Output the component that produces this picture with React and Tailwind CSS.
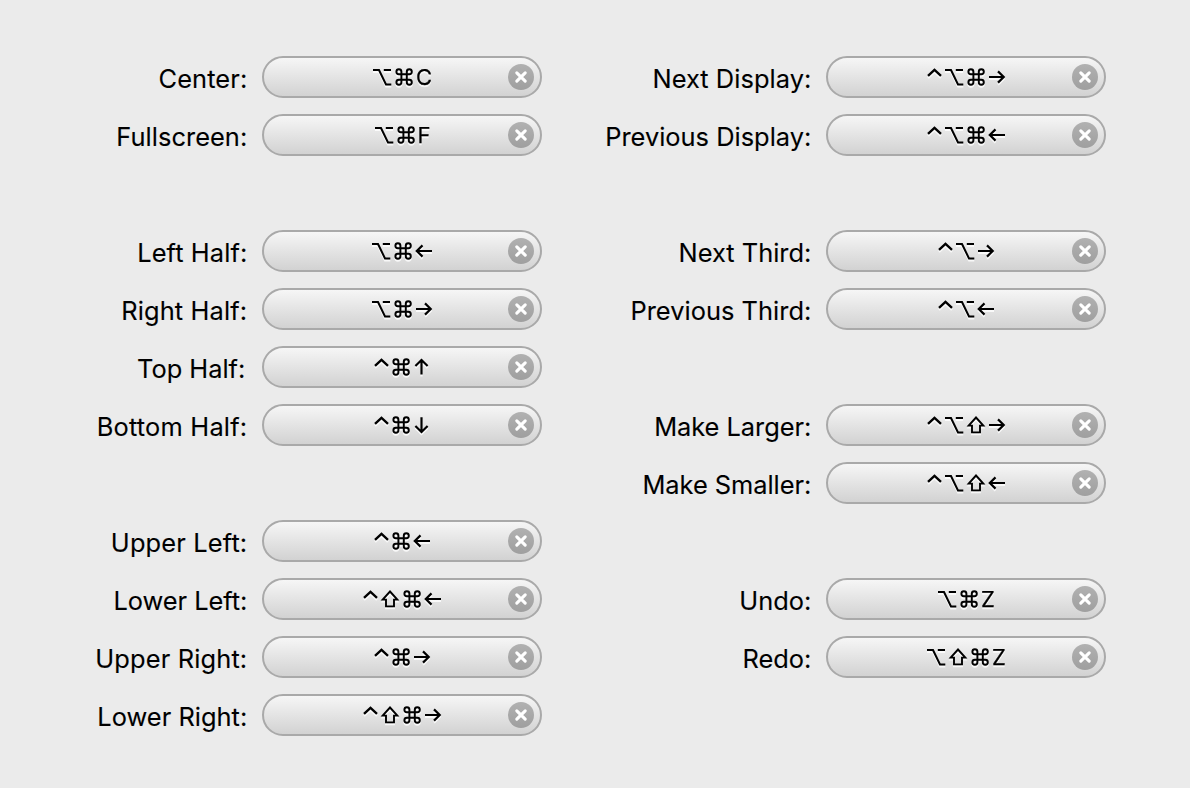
const stroke = {
  fill: 'none',
  stroke: 'currentColor',
  strokeWidth: 2,
  strokeLinejoin: 'miter',
};

function Control() {
  return (
    <svg className="h-[22px] w-[18px]" viewBox="0 0 18 22" {...stroke} strokeWidth="2.4" aria-label="Control">
      <path d="M2 9.8 8.5 3.9 15 9.8" />
    </svg>
  );
}

function Option() {
  return (
    <svg className="h-[22px] w-[22px]" viewBox="0 0 22 22" {...stroke} aria-label="Option">
      <path d="M1 4H7L14 18.4H19.3M11.8 4H19" />
    </svg>
  );
}

function Command() {
  return (
    <svg className="h-[22px] w-[22px]" viewBox="0 0 22 22" {...stroke} strokeWidth="1.95" aria-label="Command">
      <path d="M7.4 8.3H4.9a2.5 2.5 0 1 1 2.5-2.5V16.2A2.5 2.5 0 1 1 4.9 13.7H15.3a2.5 2.5 0 1 1-2.5 2.5V5.8a2.5 2.5 0 1 1 2.5 2.5Z" />
    </svg>
  );
}

function Shift() {
  return (
    <svg className="h-[22px] w-[22px]" viewBox="0 0 22 22" {...stroke} strokeWidth="1.9" aria-label="Shift">
      <path d="M10 3.5 17.3 11.6H14V18.4H6V11.6H2.7Z" />
    </svg>
  );
}

const arrowPaths = {
  right: 'M1 11H16M10 5.4 15.7 11 10 16.6',
  left: 'M17 11H2M7.5 5.4 1.8 11 7.5 16.6',
  up: 'M8.5 18.6V4.5M2.4 10 8.5 4 14.6 10',
  down: 'M8.5 3.2V17.5M2.4 12 8.5 18 14.6 12',
};

function Arrow({ direction }) {
  return (
    <svg className="h-[22px] w-[18px]" viewBox="0 0 18 22" {...stroke} strokeWidth="2.2" aria-label={direction}>
      <path d={arrowPaths[direction]} />
    </svg>
  );
}

function Key({ name }) {
  switch (name) {
    case 'ctrl':
      return <Control />;
    case 'opt':
      return <Option />;
    case 'cmd':
      return <Command />;
    case 'shift':
      return <Shift />;
    case 'left':
    case 'right':
    case 'up':
    case 'down':
      return <Arrow direction={name} />;
    default:
      return <span className="text-[22px] leading-[22px] [-webkit-text-stroke:0.25px_black]">{name}</span>;
  }
}

function Recorder({ keys }) {
  return (
    <div className="flex h-[42px] w-[280px] shrink-0 items-center rounded-full border-2 border-[#a9a9a9] bg-linear-to-b from-[#f6f6f6] to-[#d2d2d2] pr-[6px] pl-8">
      <div className="flex flex-1 items-center justify-center drop-shadow-[0_2px_0_rgba(255,255,255,0.8)]">
        {keys.split(' ').map((key) => (
          <Key key={key} name={key} />
        ))}
      </div>
      <button
        aria-label="Clear shortcut"
        className="flex size-[26px] items-center justify-center rounded-full bg-linear-to-b from-[#b1b1b1] to-[#9f9f9f]"
      >
        <svg className="size-[26px]" viewBox="0 0 26 26" stroke="#fff" strokeWidth="3.1" strokeLinecap="round">
          <path d="M8.8 8.8 17.2 17.2M17.2 8.8 8.8 17.2" />
        </svg>
      </button>
    </div>
  );
}

const leftGroups = [
  [
    ['Center:', 'opt cmd C', 'tracking-[0.1px]'],
    ['Fullscreen:', 'opt cmd F', 'tracking-[0.06px]'],
  ],
  [
    ['Left Half:', 'opt cmd left', 'tracking-[0.1px]'],
    ['Right Half:', 'opt cmd right', 'tracking-[0.15px]'],
    ['Top Half:', 'ctrl cmd up', 'pr-[2px] tracking-[0px]'],
    ['Bottom Half:', 'ctrl cmd down', 'tracking-[0.2px]'],
  ],
  [
    ['Upper Left:', 'ctrl cmd left', 'tracking-[0.15px]'],
    ['Lower Left:', 'ctrl shift cmd left', 'tracking-[-0.03px]'],
    ['Upper Right:', 'ctrl cmd right', 'tracking-[0.15px]'],
    ['Lower Right:', 'ctrl shift cmd right', 'tracking-[0.03px]'],
  ],
];

const rightGroups = [
  [
    ['Next Display:', 'ctrl opt cmd right', 'tracking-[0.05px]'],
    ['Previous Display:', 'ctrl opt cmd left', 'tracking-[0.01px]'],
  ],
  [
    ['Next Third:', 'ctrl opt right', 'tracking-[0px]'],
    ['Previous Third:', 'ctrl opt left', 'tracking-[0.03px]'],
  ],
  [
    ['Make Larger:', 'ctrl opt shift right', 'tracking-[-0.03px]'],
    ['Make Smaller:', 'ctrl opt shift left', 'tracking-[-0.03px]'],
  ],
  [
    ['Undo:', 'opt cmd Z', 'tracking-[0px]'],
    ['Redo:', 'opt shift cmd Z', 'tracking-[0px]'],
  ],
];

function Column({ groups, className }) {
  return (
    <div className={`flex flex-col gap-[74px] ${className}`}>
      {groups.map((rows, i) => (
        <div key={i} className="flex flex-col gap-4">
          {rows.map(([label, keys, spacing]) => (
            <div key={label} className="flex items-center justify-end gap-[14.7px]">
              <span
                className={`pt-[3px] text-[25.4px] leading-8 whitespace-nowrap [-webkit-text-stroke:0.1px_black] ${spacing}`}
              >
                {label}
              </span>
              <Recorder keys={keys} />
            </div>
          ))}
        </div>
      ))}
    </div>
  );
}

export default function App() {
  return (
    <main className="flex h-[788px] w-[1190px] items-start bg-[#ebebeb] pt-14 font-['Inter',sans-serif] text-black">
      <Column groups={leftGroups} className="w-[542px]" />
      <Column groups={rightGroups} className="w-[564px]" />
    </main>
  );
}
